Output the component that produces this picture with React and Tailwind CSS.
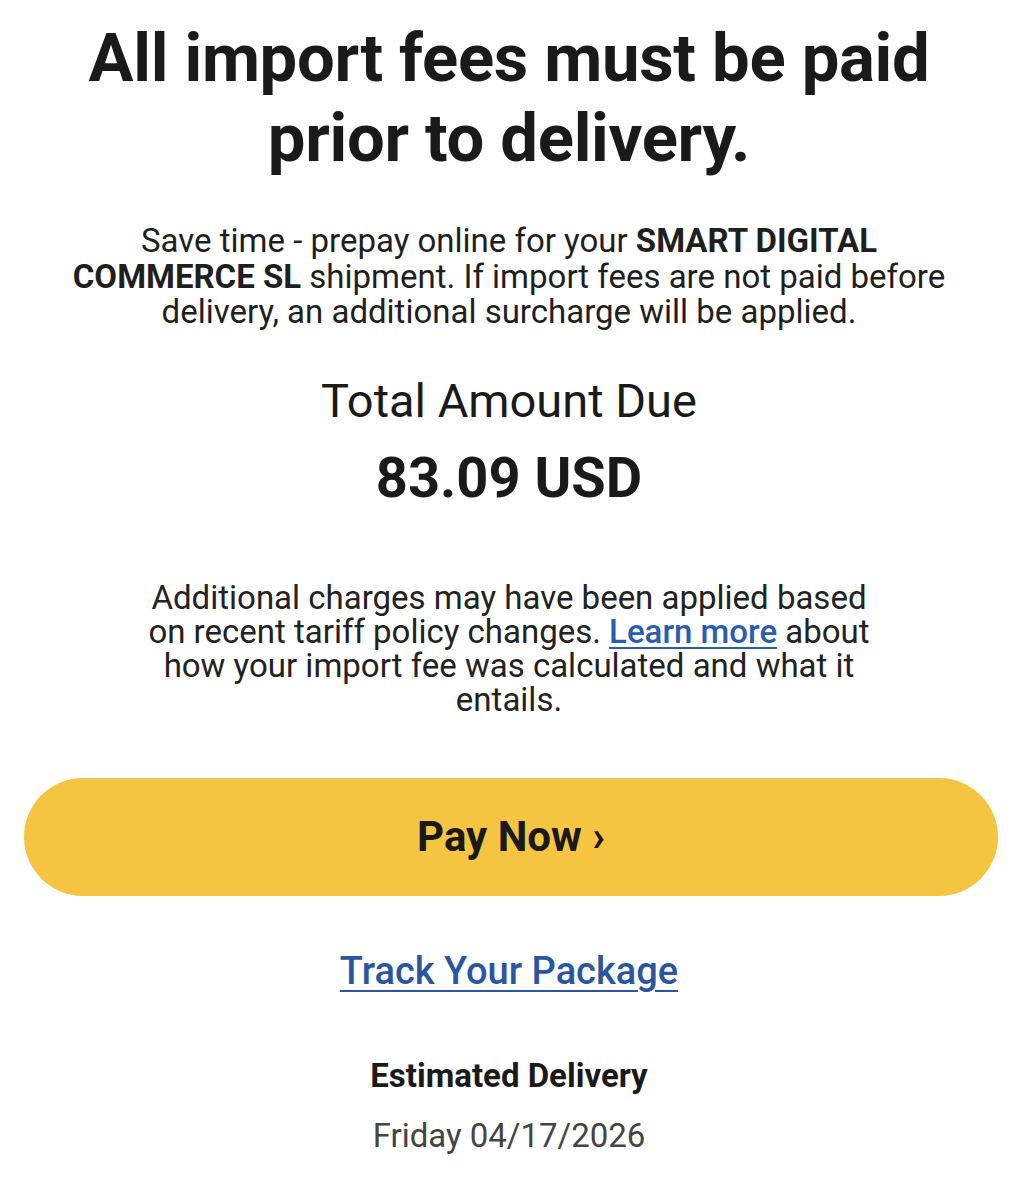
export default function App() {
  return (
    <div className="min-h-[1200px] bg-white font-['Roboto',sans-serif] text-[#1a1a1a]">
      <div className="flex flex-col items-center pt-[18px] text-center">
        <h1 className="px-10 text-[67px] font-bold leading-[80px] tracking-[-0.3px]">
          All import fees must be paid prior to delivery.
        </h1>

        <p className="mt-[45px] max-w-[920px] px-4 text-[33px] leading-[35.5px] text-[#1f1f1f]">
          Save time - prepay online for your <span className="font-bold">SMART DIGITAL COMMERCE SL</span> shipment. If
          import fees are not paid before delivery, an additional surcharge will be applied.
        </p>

        <p className="mt-[43px] text-[47px] leading-[56px]">Total Amount Due</p>
        <p className="mt-[19px] text-[56px] font-bold leading-[60px]">83.09 USD</p>

        <p className="mt-[73px] max-w-[745px] text-[33px] leading-[34px] text-[#222]">
          Additional charges may have been applied based on recent tariff policy changes.{" "}
          <a href="#" className="font-medium text-[#2a5db0] underline decoration-[2px] underline-offset-[4px]">
            Learn more
          </a>{" "}
          about how your import fee was calculated and what it entails.
        </p>

        <div className="mt-[61px] w-full pl-[24px] pr-[20px]">
          <button className="flex h-[118px] w-full items-center justify-center rounded-full bg-[#f5c542] text-[42px] font-bold text-[#1a1a1a]">
            Pay Now ›
          </button>
        </div>

        <a
          href="#"
          className="mt-[52px] text-[38px] font-medium leading-[46px] text-[#2a55a0] underline decoration-[2px] underline-offset-[6px]"
        >
          Track Your Package
        </a>

        <p className="mt-[62px] text-[33px] font-bold leading-[40px]">Estimated Delivery</p>
        <p className="mt-[20px] text-[33px] leading-[40px] text-[#444]">Friday 04/17/2026</p>
      </div>
    </div>
  );
}
